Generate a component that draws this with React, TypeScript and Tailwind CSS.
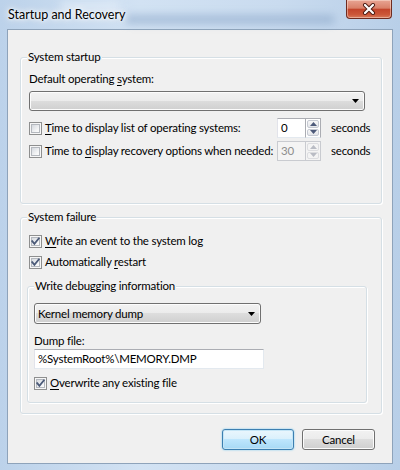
import React from "react";

function U({ children }: { children: React.ReactNode }) {
  return <span className="underline underline-offset-[2px] decoration-[1px]">{children}</span>;
}

function CheckBox({ checked }: { checked: boolean }) {
  return (
    <span className="relative inline-flex w-[13px] h-[13px] shrink-0 border border-[#8e8f8f] bg-[#f6f6f6] p-[1px]">
      <span className="block w-full h-full border border-[#b4b8be] bg-[linear-gradient(135deg,#d5d9df,#f4f5f6_70%,#fbfbfb)]" />
      {checked && (
        <svg className="absolute left-0 top-0" width="11" height="11" viewBox="0 0 11 11">
          <path d="M2.2 5.2 L4.4 7.8 L8.8 2.4" stroke="#4b5a78" strokeWidth="1.8" fill="none" strokeLinecap="square" />
        </svg>
      )}
    </span>
  );
}

function Arrow() {
  return (
    <svg width="7" height="4" viewBox="0 0 7 4">
      <path d="M0 0 H7 L3.5 4 Z" fill="#000" />
    </svg>
  );
}

function SpinBox({ value, disabled }: { value: string; disabled?: boolean }) {
  const arrow = disabled ? "#b9bcc4" : "#4d5a7a";
  return (
    <div className="flex h-[20px] w-[44px] shrink-0">
      <div
        className={
          disabled
            ? "w-[28px] h-full border border-[#c9cbd0] border-r-0 bg-[#f4f4f4] text-[#8d8d8d] flex items-center pl-[3px] leading-none"
            : "w-[28px] h-full border border-[#abadb3] border-r-0 border-b-[#e3e9ef] border-l-[#e2e3ea] bg-white flex items-center pl-[3px] leading-none"
        }
      >
        {value}
      </div>
      <div
        className={
          disabled
            ? "w-[16px] h-full border border-[#c9cbd0] bg-[#f4f4f4] flex flex-col p-[1px] gap-[1px]"
            : "w-[16px] h-full border border-[#abadb3] border-b-[#e3e9ef] bg-white flex flex-col p-[1px] gap-[1px]"
        }
      >
        <div className={disabled ? "flex-1 border border-[#dcdde0] rounded-[2px] bg-[#f4f4f4] flex items-center justify-center" : "flex-1 border border-[#c5c9d2] rounded-[2px] bg-[linear-gradient(#f7f7f7,#e4e6ea)] flex items-center justify-center"}>
          <svg width="7" height="4" viewBox="0 0 7 4">
            <path d="M0 4 H7 L3.5 0 Z" fill={arrow} />
          </svg>
        </div>
        <div className={disabled ? "flex-1 border border-[#dcdde0] rounded-[2px] bg-[#f4f4f4] flex items-center justify-center" : "flex-1 border border-[#c5c9d2] rounded-[2px] bg-[linear-gradient(#f7f7f7,#e4e6ea)] flex items-center justify-center"}>
          <svg width="7" height="4" viewBox="0 0 7 4">
            <path d="M0 0 H7 L3.5 4 Z" fill={arrow} />
          </svg>
        </div>
      </div>
    </div>
  );
}

const btnBg =
  "border border-[#707070] rounded-[3px] bg-[linear-gradient(#f2f2f2,#ebebeb_50%,#dddddd_50%,#cfcfcf)] shadow-[inset_0_0_0_1px_#fcfcfc]";

export default function App() {
  return (
    <div className="relative w-[400px] h-[470px] overflow-hidden font-['Lato',sans-serif] text-[11.5px] tracking-[-0.2px] text-black bg-[linear-gradient(90deg,#bcd2ea,#d2e2f3_35%,#c9dbef_70%,#b8cfe8)]">
      {/* blurred background behind glass */}
      <div className="absolute left-[125px] top-[15px] w-[210px] h-[9px] rounded-full bg-[#8aa6c8] opacity-60 blur-[4px]" />
      <div className="absolute left-[60px] top-[2px] w-[60px] h-[8px] rounded-full bg-[#e8f1fa] opacity-70 blur-[4px]" />

      {/* title bar */}
      <div className="relative h-[29px] flex items-center pl-[8px]">
        <span className="text-[12.5px] tracking-normal leading-[16px] [text-shadow:0_0_6px_#fff,0_0_3px_#fff,0_0_10px_#fff]">Startup and Recovery</span>
        <div className="absolute right-[8px] top-0 w-[46px] h-[19px] rounded-b-[4px] border border-t-0 border-[#6e2b20] bg-[linear-gradient(#e8a594,#d98069_45%,#c3452c_52%,#cb5638_80%,#d87a5c)] shadow-[inset_0_0_0_1px_rgba(255,235,225,0.45)] flex items-center justify-center">
          <svg width="14" height="12" viewBox="0 0 14 12">
            <path d="M3 2 L11 10 M11 2 L3 10" stroke="#4a1a12" strokeWidth="4" strokeLinecap="round" />
            <path d="M3 2 L11 10 M11 2 L3 10" stroke="#ffffff" strokeWidth="2.2" strokeLinecap="round" />
          </svg>
        </div>
      </div>

      {/* client area */}
      <div className="ml-[7px] w-[386px] h-[435px] border border-[#8ea3ba] bg-[#f0f0f0] pt-[27px]">
        {/* System startup */}
        <div className="relative ml-[12px] w-[362px] h-[147px] border border-[#d5dfe5] rounded-[3px] shadow-[inset_1px_1px_0_#fff,1px_1px_0_#fff]">
          <span className="absolute left-[6px] -top-[9px] px-[1px] bg-[#f0f0f0] leading-[16px]">System startup</span>
          <div className="flex flex-col pl-[8px]">
            <div className="mt-[13px] leading-[16px]">
              Default operating <U>s</U>ystem:
            </div>
            <div className={`mt-[4px] w-[336px] h-[20px] flex items-center justify-end pr-[5px] ${btnBg}`}>
              <Arrow />
            </div>
            <div className="mt-[7px] h-[20px] flex items-center">
              <div className="w-[248px] flex items-center gap-[3px]">
                <CheckBox checked={false} />
                <span className="leading-[16px] whitespace-nowrap">
                  <U>T</U>ime to display list of operating systems:
                </span>
              </div>
              <SpinBox value="0" />
              <span className="ml-[10px] leading-[16px]">seconds</span>
            </div>
            <div className="mt-[3px] h-[20px] flex items-center">
              <div className="w-[248px] flex items-center gap-[3px]">
                <CheckBox checked={false} />
                <span className="leading-[16px] whitespace-nowrap">
                  Time to <U>d</U>isplay recovery options when needed:
                </span>
              </div>
              <SpinBox value="30" disabled />
              <span className="ml-[10px] leading-[16px]">seconds</span>
            </div>
          </div>
        </div>

        {/* System failure */}
        <div className="relative mt-[13px] ml-[12px] w-[362px] h-[197px] border border-[#d5dfe5] rounded-[3px] shadow-[inset_1px_1px_0_#fff,1px_1px_0_#fff]">
          <span className="absolute left-[6px] -top-[9px] px-[1px] bg-[#f0f0f0] leading-[16px]">System failure</span>
          <div className="flex flex-col">
            <div className="ml-[8px] mt-[15px] h-[16px] flex items-center gap-[3px]">
              <CheckBox checked />
              <span className="leading-[16px]">
                <U>W</U>rite an event to the system log
              </span>
            </div>
            <div className="ml-[8px] mt-[5px] h-[16px] flex items-center gap-[3px]">
              <CheckBox checked />
              <span className="leading-[16px]">
                Automatically <U>r</U>estart
              </span>
            </div>

            {/* Write debugging information */}
            <div className="relative ml-[6px] mt-[16px] w-[340px] h-[117px] border border-[#d5dfe5] rounded-[3px] shadow-[inset_1px_1px_0_#fff,1px_1px_0_#fff]">
              <span className="absolute left-[6px] -top-[9px] px-[1px] bg-[#f0f0f0] leading-[16px]">Write debugging information</span>
              <div className="flex flex-col">
                <div className={`ml-[6px] mt-[16px] w-[227px] h-[21px] flex items-center justify-between pl-[3px] pr-[5px] ${btnBg}`}>
                  <span className="leading-[16px]">Kernel memory dump</span>
                  <Arrow />
                </div>
                <div className="ml-[6px] mt-[10px] leading-[14px]">Dump file:</div>
                <div className="ml-[6px] mt-[1px] w-[230px] h-[20px] border border-[#e3e9ef] border-t-[#abadb3] border-l-[#e2e3ea] bg-white flex items-center pl-[3px] leading-none">
                  %SystemRoot%\MEMORY.DMP
                </div>
                <div className="ml-[6px] mt-[6px] h-[16px] flex items-center gap-[3px]">
                  <CheckBox checked />
                  <span className="leading-[16px]">
                    <U>O</U>verwrite any existing file
                  </span>
                </div>
              </div>
            </div>
          </div>
        </div>

        {/* buttons */}
        <div className="mt-[15px] flex justify-end gap-[8px] pr-[17px]">
          <div className="w-[72px] h-[21px] rounded-[3px] border border-[#3c7fb1] bg-[linear-gradient(#eaf6fd,#d9f0fc_50%,#bee6fd_50%,#a7d9f5)] shadow-[inset_0_0_0_1px_#c4e5f6,0_0_2px_#6fc7f0] flex items-center justify-center leading-none">
            OK
          </div>
          <div className={`w-[73px] h-[21px] flex items-center justify-center leading-none ${btnBg}`}>Cancel</div>
        </div>
      </div>
    </div>
  );
}
